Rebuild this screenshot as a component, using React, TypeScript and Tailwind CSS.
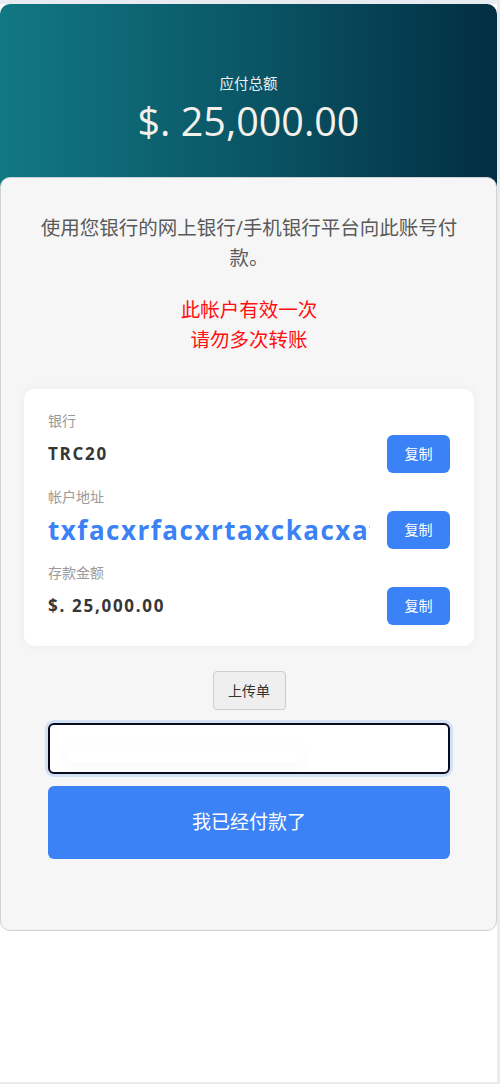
import React from "react";

const cjk = { fontFamily: '"Open Sans", "Noto Sans CJK SC", sans-serif' };

function CopyButton() {
  return (
    <button
      className="w-[63px] h-[38px] shrink-0 rounded-[6px] bg-[#3b82f6] text-white text-[14px] leading-none"
      style={cjk}
    >
      复制
    </button>
  );
}

function Item({
  label,
  children,
}: {
  label: string;
  children: React.ReactNode;
}) {
  return (
    <div className="flex flex-col">
      <div className="text-[14px] leading-[20px] text-[#9a9a9a]">{label}</div>
      <div className="mt-[4px] flex h-[38px] items-center gap-[17px]">
        <div className="min-w-0 flex-1 overflow-hidden whitespace-nowrap">{children}</div>
        <CopyButton />
      </div>
    </div>
  );
}

export default function App() {
  return (
    <div className="min-h-[1084px] bg-[#e8ecf1] pt-[4px] pr-[3px] pb-[2px]" style={cjk}>
      <div className="h-[1078px] bg-white">
        <div className="flex h-[183px] flex-col items-center rounded-t-[10px] bg-gradient-to-r from-[#127883] via-[#0a5666] to-[#032e42] pt-[70px]">
          <div className="text-[14.5px] leading-[20px] text-[#eef0f0]">应付总额</div>
          <div className="mt-[3px] text-[39.5px] leading-[48px] text-[#f4f1ea]">$. 25,000.00</div>
        </div>
        <div className="relative -mt-[10px] rounded-[10px] border border-[#cfd2d4] bg-[#f6f6f6] pl-[23px] pr-[22px] pt-[35px] pb-[71px]">
          <p className="mx-auto w-[420px] text-center text-[19.5px] leading-[30px] text-[#5a5a5a]">
            使用您银行的网上银行/手机银行平台向此账号付款。
          </p>
          <p className="mt-[22px] text-center text-[19.5px] leading-[30px] text-[#ff1010]">
            此帐户有效一次
            <br />
            请勿多次转账
          </p>
          <div className="mt-[34px] flex flex-col gap-[14px] rounded-[10px] bg-white px-6 pt-[22px] pb-[21px] shadow-[0_0_10px_rgba(0,0,0,0.05)]">
            <Item label="银行">
              <span className="text-[17px] font-bold tracking-[0.1em] text-[#363636]">TRC20</span>
            </Item>
            <Item label="帐户地址">
              <span className="text-[26px] font-bold tracking-[1.5px] text-[#3b82f6]">
                txfacxrfacxrtaxckacxafxrtaxckacxaf
              </span>
            </Item>
            <Item label="存款金额">
              <span className="text-[17px] font-bold tracking-[0.1em] text-[#363636]">$. 25,000.00</span>
            </Item>
          </div>
          <div className="mt-[25px] flex justify-center">
            <button className="h-[39px] w-[73px] rounded-[4px] border border-[#cccccc] bg-[#efefef] text-[14px] text-[#333]">
              上传单
            </button>
          </div>
          <div className="mx-6 mt-[13px]">
            <div className="relative h-[51px] rounded-[6px] border-2 border-[#0b0b1e] bg-white shadow-[0_0_0_3px_rgba(147,187,245,0.35)]">
              <input className="h-full w-full rounded-[6px] bg-transparent px-4 outline-none" />
              <span className="pointer-events-none absolute left-[18px] top-[20px] h-[18px] w-[236px] bg-white shadow-[0_2px_8px_rgba(0,0,0,0.05)] blur-[2px]" />
            </div>
          </div>
          <div className="mx-6 mt-[12px]">
            <button className="h-[73px] w-full rounded-[6px] bg-[#3b82f6] text-[19px] text-white">
              我已经付款了
            </button>
          </div>
        </div>
      </div>
    </div>
  );
}
